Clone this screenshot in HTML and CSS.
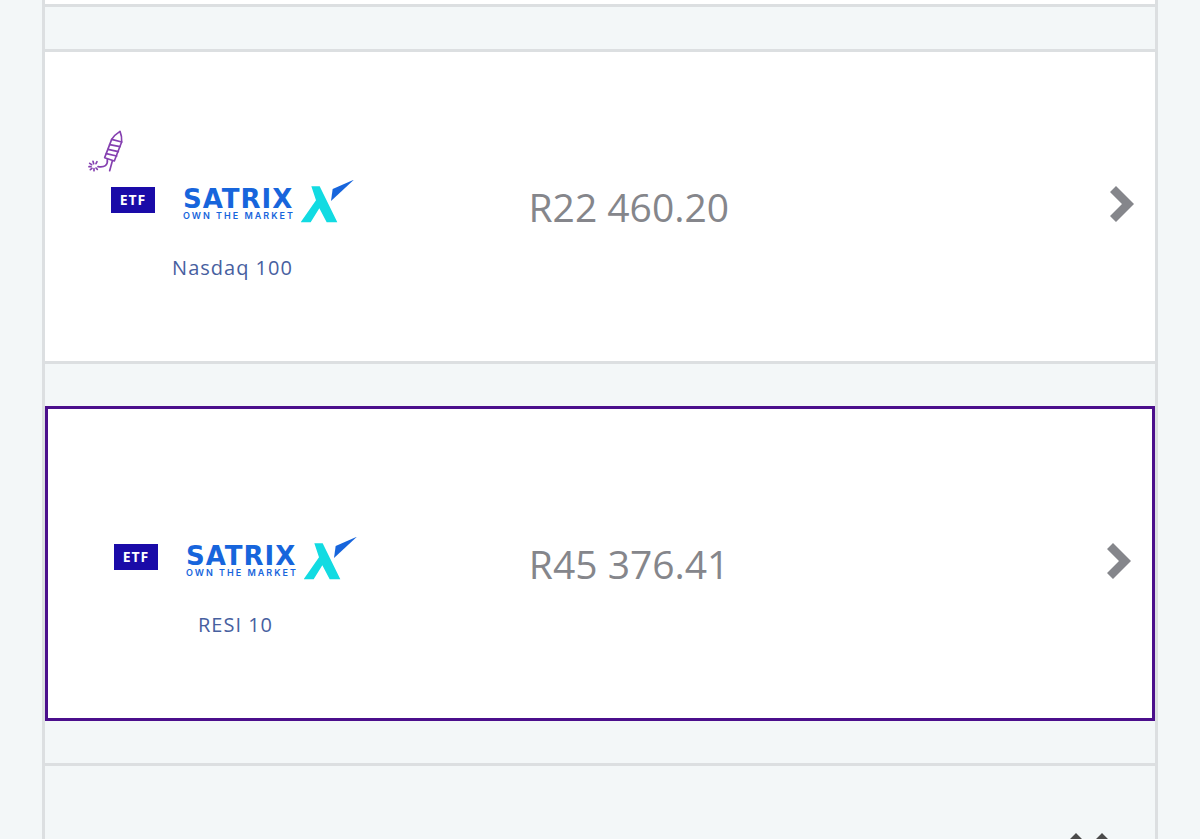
FILE: index.html
```html
<!DOCTYPE html>
<html lang="en">
<head>
    <meta charset="UTF-8">
    <meta name="viewport" content="width=device-width, initial-scale=1.0">
    <title>My Investments</title>
    <link rel="stylesheet" href="styles.css">
</head>
<body>
    <!-- Shared logo mark -->
    <svg class="defs" width="0" height="0" aria-hidden="true">
        <symbol id="satrix-mark" viewBox="0 0 162 132">
            <path fill="#12dbe2" d="M31 19h25l53 108H77L55 85 29 127H-1l46-66z"/>
            <path fill="#1765dc" d="M159-1L95 27l-5 36z"/>
        </symbol>
        <symbol id="chevron" viewBox="0 0 24 36">
            <path fill="#85868b" d="M6 0l18 18L6 36l-6-6 12-12L0 6z"/>
        </symbol>
    </svg>

    <main class="container">
        <div class="card card-end"></div>

        <article class="card">
            <div class="product">
                <div class="product-icon">
                    <svg width="44" height="44" viewBox="0 0 132 132" fill="none" stroke="#8540b0" stroke-width="5" stroke-linecap="round" stroke-linejoin="round" aria-hidden="true">
                        <path d="M96 4Q80 14 71 28L50 83l29 10 22-57Q102 18 96 4z"/>
                        <path d="M71 28l30 8M65 44l31 6M60 58l31 7M55 71l31 7"/>
                        <path d="M73 93l-8 29M58 88c2 18-8 25-28 22"/>
                        <path d="M15 94l2 7M27 95l-3 6M5 100l6 4M3 110h6M7 119l5-4M18 122v-6M28 118l-4-4"/>
                    </svg>
                </div>
                <div class="product-brand">
                    <span class="badge">ETF</span>
                    <div class="logo">
                        <div class="logo-text">
                            <span class="logo-name">SATRIX</span>
                            <span class="logo-tagline">OWN THE MARKET</span>
                        </div>
                        <svg class="logo-mark" aria-hidden="true"><use href="#satrix-mark"/></svg>
                    </div>
                </div>
                <h2 class="product-name">Nasdaq 100</h2>
            </div>
            <p class="price">R22 460.20</p>
            <button type="button" class="open" aria-label="Open Nasdaq 100">
                <svg width="24" height="36" aria-hidden="true"><use href="#chevron"/></svg>
            </button>
        </article>

        <article class="card selected">
            <div class="product">
                <div class="product-icon"></div>
                <div class="product-brand">
                    <span class="badge">ETF</span>
                    <div class="logo">
                        <div class="logo-text">
                            <span class="logo-name">SATRIX</span>
                            <span class="logo-tagline">OWN THE MARKET</span>
                        </div>
                        <svg class="logo-mark" aria-hidden="true"><use href="#satrix-mark"/></svg>
                    </div>
                </div>
                <h2 class="product-name">RESI 10</h2>
            </div>
            <p class="price">R45 376.41</p>
            <button type="button" class="open" aria-label="Open RESI 10">
                <svg width="24" height="36" aria-hidden="true"><use href="#chevron"/></svg>
            </button>
        </article>

        <section class="panel">
            <button type="button" class="close" aria-label="Close">
                <svg width="42" height="42" viewBox="0 0 42 42" aria-hidden="true">
                    <path fill="#4a4a4a" d="M8 0l13 13L34 0l8 8-13 13 13 13-8 8-13-13L8 42l-8-8 13-13L0 8z"/>
                </svg>
            </button>
        </section>
    </main>
</body>
</html>
```

FILE: styles.css
```css
* {
    box-sizing: border-box;
}

body {
    margin: 0;
    height: 100vh;
    overflow: hidden;
    font-family: "Open Sans", "Noto Sans", sans-serif;
    background-color: #f3f7f8;
}

.defs {
    position: absolute;
}

.container {
    display: flex;
    flex-direction: column;
    gap: 42px;
    min-height: 100vh;
    margin: 0 42px;
    border: solid #dcdfe1;
    border-width: 0 3px;
}

.card {
    display: grid;
    grid-template-columns: 44.4% 1fr auto;
    align-items: center;
    min-height: 315px;
    padding-right: 21px;
    background: #fff;
    border: solid #dcdfe1;
    border-width: 3px 0;
}

/* Tail of the previous card */
.card-end {
    min-height: 7px;
    border-top: none;
}

.selected {
    border: 3px solid #4b0f8c;
}

.product {
    align-self: start;
    justify-self: start;
    padding: 78px 0 0 43px;
}

.product-icon {
    height: 44px;
    margin-bottom: 6px;
}

.product-icon svg {
    display: block;
}

.product-brand {
    display: flex;
    align-items: center;
    gap: 28px;
    padding-left: 23px;
}

.badge {
    width: 44px;
    margin-bottom: 4px;
    background: #1a0ba8;
    color: #fff;
    font-size: 14px;
    font-weight: 700;
    line-height: 26px;
    letter-spacing: 1px;
    text-align: center;
}

.logo {
    display: flex;
    align-items: flex-start;
    color: #1765dc;
    white-space: nowrap;
}

.logo-text {
    width: 118px;
    padding-top: 8px;
}

.logo-name,
.logo-tagline {
    display: block;
}

.logo-name {
    font-family: "DejaVu Sans", sans-serif;
    font-size: 26px;
    font-weight: 700;
    line-height: 22px;
    letter-spacing: 1px;
}

.logo-tagline {
    font-family: Inter, sans-serif;
    font-size: 9px;
    font-weight: 600;
    line-height: 12px;
    letter-spacing: 2px;
}

.logo-mark {
    width: 54px;
    height: 44px;
    overflow: visible;
}

.product-name {
    margin: 30px 0 0 22px;
    color: #47609f;
    font-size: 20px;
    font-weight: 400;
    line-height: 28px;
    letter-spacing: 1px;
    text-align: center;
}

.price {
    margin: 0;
    color: #85868b;
    font-size: 39px;
    line-height: 52px;
}

button {
    padding: 0;
    border: none;
    background: none;
    cursor: pointer;
}

button svg {
    display: block;
}

.open {
    margin-bottom: 6px;
}

.panel {
    display: flex;
    justify-content: flex-end;
    padding: 67px 45px 45px;
    border-top: 3px solid #dcdfe1;
}
```
